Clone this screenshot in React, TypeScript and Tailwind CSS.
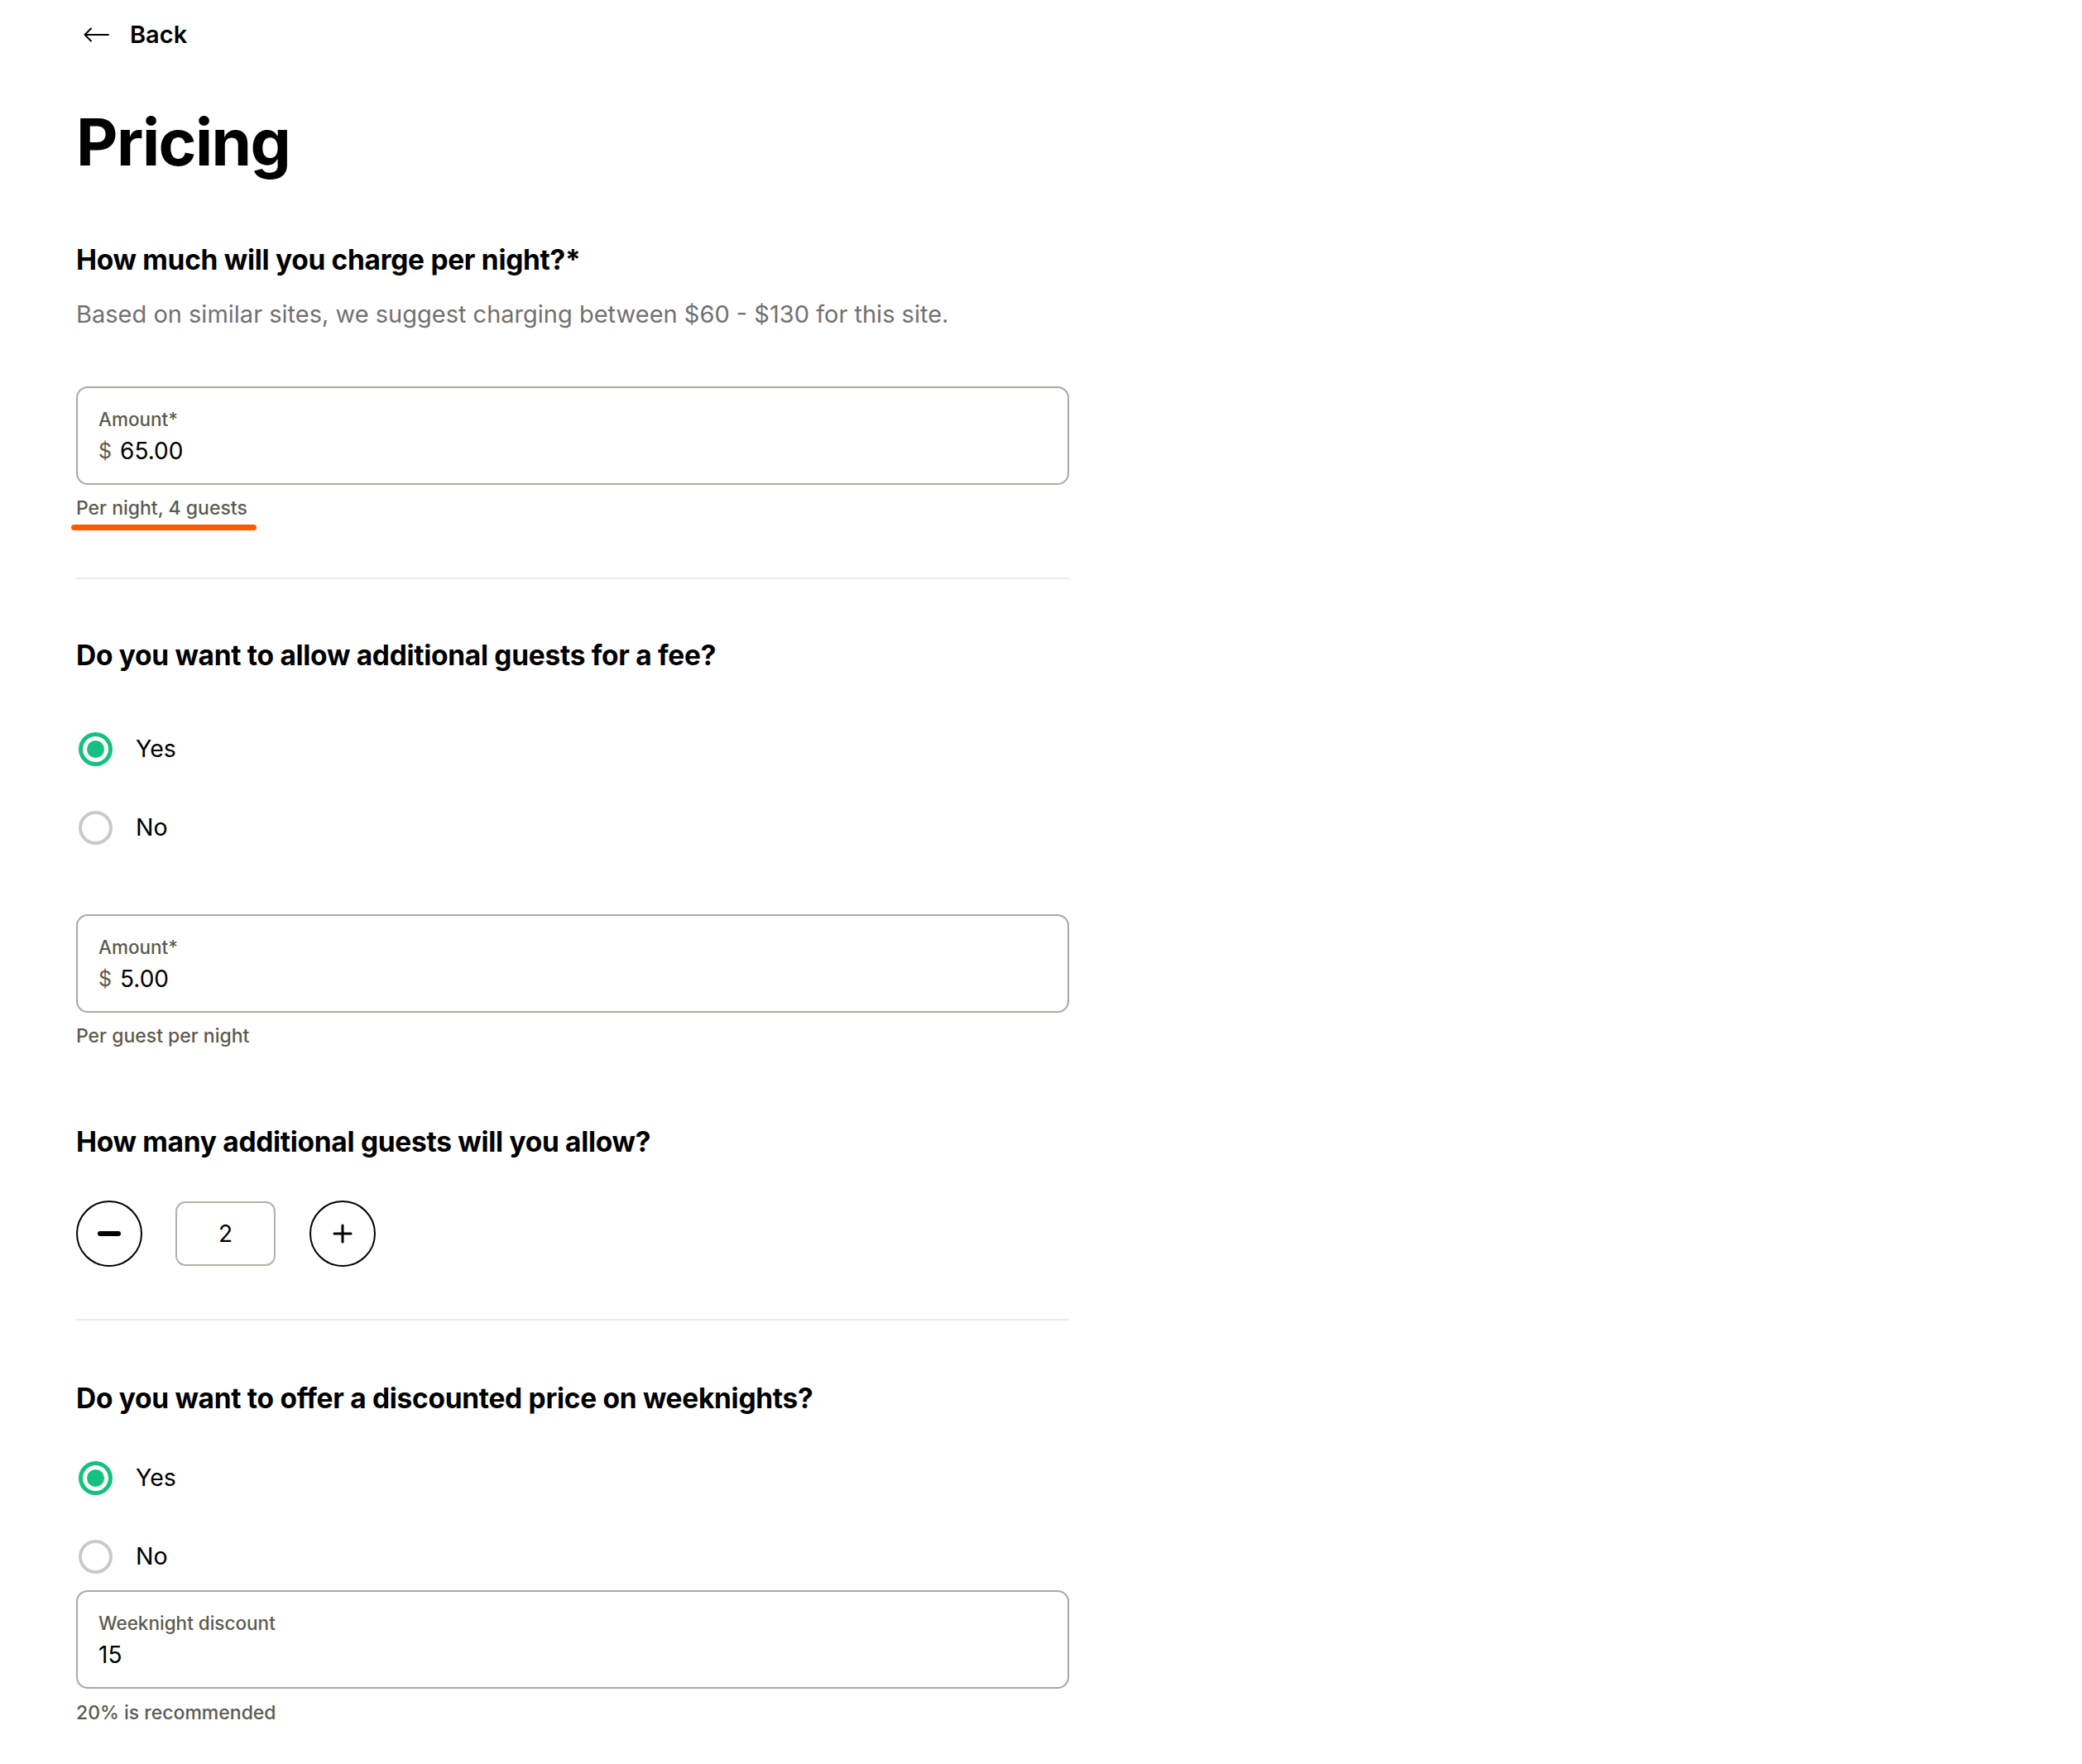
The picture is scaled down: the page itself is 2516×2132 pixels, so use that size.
import React from "react";

const FONT = { fontFamily: "Inter, 'Noto Sans', sans-serif" };

function Radio({ checked, label }: { checked: boolean; label: string }) {
  return (
    <div className="flex h-[40px] items-center">
      <div className="ml-[3px] flex h-[41px] w-[41px] items-center justify-center">
        {checked ? (
          <div className="flex h-[41px] w-[41px] items-center justify-center rounded-full border-[5px] border-[#14c17f]">
            <div className="h-[21px] w-[21px] rounded-full bg-[#14c17f]" />
          </div>
        ) : (
          <div className="h-[41px] w-[41px] rounded-full border-[4px] border-[#c9c9c9]" />
        )}
      </div>
      <span className="ml-[28px] text-[28.5px] leading-[40px] text-black">{label}</span>
    </div>
  );
}

function Field({ label, value, prefix }: { label: string; value: string; prefix?: boolean }) {
  return (
    <div className="flex h-[119px] w-[1200px] flex-col rounded-[14px] border-2 border-[#aaa9a1] pl-[25px] pt-[26px]">
      <div className="text-[22.5px] font-medium leading-[24px] text-[#5c5b4f]">{label}</div>
      <div className="mt-[10px] flex items-center text-[28px] leading-[32px] text-black">
        {prefix && <span className="mr-[10px] text-[25px] text-[#5c5b4f]">$</span>}
        <span>{value}</span>
      </div>
    </div>
  );
}

function Heading({ children, className = "" }: { children: React.ReactNode; className?: string }) {
  return (
    <h2 className={`text-[33.5px] font-bold leading-[40px] tracking-[-0.3px] text-black ${className}`}>{children}</h2>
  );
}

function Helper({ children, className = "" }: { children: React.ReactNode; className?: string }) {
  return <div className={`text-[23px] font-medium leading-[28px] text-[#5c5b4f] ${className}`}>{children}</div>;
}

export default function App() {
  return (
    <div className="min-h-[2132px] w-full bg-white" style={FONT}>
      <div className="flex w-[1292px] flex-col pl-[92px] pt-[22px]">
        <div className="flex h-[40px] items-center">
          <svg width="31" height="18" viewBox="0 0 31 18" className="ml-[9px]" fill="none" stroke="black" strokeWidth="2" strokeLinecap="round" strokeLinejoin="round">
            <path d="M30 9H2" />
            <path d="M9 1.5 1.5 9 9 16.5" />
          </svg>
          <span className="ml-[25px] text-[29px] font-semibold leading-[40px] text-black">Back</span>
        </div>

        <h1 className="mt-[70px] text-[78px] font-bold leading-[80px] tracking-[-1.5px] text-black">Pricing</h1>

        <Heading className="mt-[82px]">How much will you charge per night?*</Heading>
        <p className="mt-[28px] text-[29px] leading-[36px] text-[#717171]">
          Based on similar sites, we suggest charging between $60 - $130 for this site.
        </p>

        <div className="mt-[69px]">
          <Field label="Amount*" value="65.00" prefix />
        </div>
        <Helper className="mt-[14px]">Per night, 4 guests</Helper>
        <div className="ml-[-6px] mt-[6px] h-[7px] w-[224px] rounded-full bg-[#ff5a00]" />

        <div className="mt-[57px] h-[2px] w-[1200px] bg-[#ececec]" />

        <Heading className="mt-[72px]">Do you want to allow additional guests for a fee?</Heading>
        <div className="mt-[73px]">
          <Radio checked label="Yes" />
        </div>
        <div className="mt-[55px]">
          <Radio checked={false} label="No" />
        </div>

        <div className="mt-[85px]">
          <Field label="Amount*" value="5.00" prefix />
        </div>
        <Helper className="mt-[14px]">Per guest per night</Helper>

        <Heading className="mt-[94px]">How many additional guests will you allow?</Heading>

        <div className="mt-[51px] flex h-[80px] items-center">
          <button className="flex h-[80px] w-[80px] items-center justify-center rounded-full border-2 border-black bg-white">
            <div className="h-[6px] w-[28px] rounded-full bg-black" />
          </button>
          <div className="ml-[40px] flex h-[78px] w-[121px] items-center justify-center rounded-[12px] border-2 border-[#b3b2aa] text-[28px] text-black">
            2
          </div>
          <button className="ml-[41px] flex h-[80px] w-[80px] items-center justify-center rounded-full border-2 border-black bg-white">
            <svg width="24" height="24" viewBox="0 0 24 24" fill="none" stroke="black" strokeWidth="3" strokeLinecap="round">
              <path d="M12 2v20M2 12h20" />
            </svg>
          </button>
        </div>

        <div className="mt-[63px] h-[2px] w-[1200px] bg-[#ececec]" />

        <Heading className="mt-[74px]">Do you want to offer a discounted price on weeknights?</Heading>
        <div className="mt-[56px]">
          <Radio checked label="Yes" />
        </div>
        <div className="mt-[55px]">
          <Radio checked={false} label="No" />
        </div>

        <div className="mt-[21px]">
          <Field label="Weeknight discount" value="15" />
        </div>
        <Helper className="mt-[15px]">20% is recommended</Helper>
      </div>
    </div>
  );
}
